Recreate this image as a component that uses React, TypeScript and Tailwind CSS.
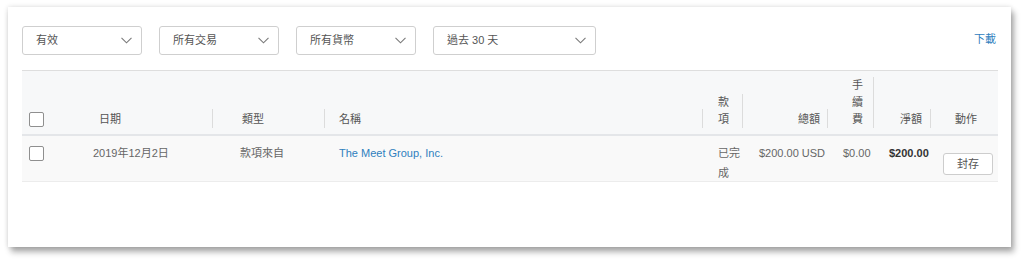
const font = "font-['Liberation_Sans','Noto_Sans_CJK_TC',sans-serif]";

const filters = [
  { label: "有效", width: "w-[120px]" },
  { label: "所有交易", width: "w-[120px]" },
  { label: "所有貨幣", width: "w-[120px]" },
  { label: "過去 30 天", width: "w-[163px]" },
];

function Chevron() {
  return (
    <svg width="11" height="7" viewBox="0 0 11 7" className="shrink-0">
      <polyline points="0.5,0.8 5.5,5.8 10.5,0.8" fill="none" stroke="#7a7a7a" strokeWidth="1.1" />
    </svg>
  );
}

function Checkbox() {
  return <div className="h-[15px] w-[15px] rounded-[2px] border border-[#8f8f8f] bg-white" />;
}

// header cell content with its right divider
function Head({ children, className = "" }: { children: React.ReactNode; className?: string }) {
  return <div className={`border-r border-[#dcdcdc] leading-[17px] ${className}`}>{children}</div>;
}

export default function App() {
  return (
    <div className={`h-[262px] w-[1024px] overflow-hidden bg-white pt-[7px] pl-[8px] ${font}`}>
      <div className="h-[240px] w-[1003px] bg-white px-[14px] pt-[19px] shadow-[3px_5px_6px_rgba(0,0,0,0.32),0_0_5px_rgba(0,0,0,0.14)]">
        <div className="flex h-[29px] items-center">
          <div className="flex gap-[17px]">
            {filters.map((f) => (
              <div
                key={f.label}
                className={`flex h-[29px] ${f.width} items-center justify-between rounded-[3px] border border-[#cfcfcf] bg-white pr-[9px] pl-[13px] text-[11px] text-[#555]`}
              >
                <span>{f.label}</span>
                <Chevron />
              </div>
            ))}
          </div>
          <a className="mt-[-3px] ml-auto mr-[1px] text-[11px] text-[#2f80be]">下載</a>
        </div>

        <div className="mt-[15px] w-[976px] border-t border-[#dedede] text-[11px]">
          {/* header */}
          <div className="flex h-[65px] items-end border-b-2 border-[#e4e6e9] bg-[#f7f8f9] pb-[6px] text-[#555]">
            <div className="w-[28px] pl-[7px] pb-[1px]">
              <Checkbox />
            </div>
            <div className="w-[163px]">
              <Head className="pl-[49px] pt-[2px]">日期</Head>
            </div>
            <div className="w-[112px]">
              <Head className="pl-[29px] pt-[2px]">類型</Head>
            </div>
            <div className="w-[378px]">
              <Head className="pl-[14px] pt-[2px]">名稱</Head>
            </div>
            <div className="w-[40px]">
              <Head className="pl-[15px]">
                款<br />項
              </Head>
            </div>
            <div className="w-[85px]">
              <Head className="pr-[7px] pt-[2px] text-right">總額</Head>
            </div>
            <div className="w-[46px]">
              <Head className="pl-[24px]">
                手<br />續<br />費
              </Head>
            </div>
            <div className="w-[57px]">
              <Head className="pr-[8px] pt-[2px] text-right">淨額</Head>
            </div>
            <div className="w-[67px]">
              <div className="pl-[24px] pt-[2px] leading-[17px]">動作</div>
            </div>
          </div>

          {/* row */}
          <div className="flex h-[46px] items-start border-b border-[#ececec] bg-[#f9f9f9] pt-[7px] leading-[20px] text-[#666]">
            <div className="w-[28px] pl-[7px] pt-[3px]">
              <Checkbox />
            </div>
            <div className="w-[163px] pl-[43px]">2019年12月2日</div>
            <div className="w-[112px] pl-[27px]">款項來自</div>
            <div className="w-[378px] pl-[14px] text-[#2f80be]">The Meet Group, Inc.</div>
            <div className="w-[40px] pl-[15px]">
              已完
              <br />
              成
            </div>
            <div className="w-[85px] pl-[16px] whitespace-nowrap">$200.00 USD</div>
            <div className="w-[46px] pl-[15px]">$0.00</div>
            <div className="w-[57px] pl-[15px] font-bold text-[#333]">$200.00</div>
            <div className="w-[67px] pl-[12px] pt-[10px]">
              <div className="flex h-[22px] w-[50px] items-center justify-center rounded-[3px] border border-[#cdcdcd] bg-white text-[#555]">
                封存
              </div>
            </div>
          </div>
        </div>
      </div>
    </div>
  );
}
